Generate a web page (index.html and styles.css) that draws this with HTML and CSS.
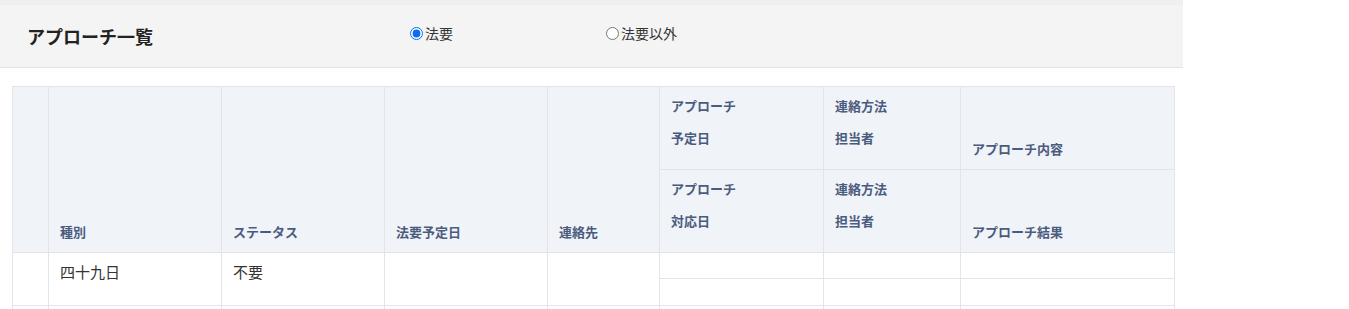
FILE: index.html
```html
<!DOCTYPE html>
<html lang="ja">
<head>
    <meta charset="UTF-8">
    <meta name="viewport" content="width=device-width, initial-scale=1.0">
    <title>アプローチ一覧</title>
    <link rel="stylesheet" href="styles.css">
</head>
<body>
    <div class="page">
        <div class="topbar">
            <h1 class="title">アプローチ一覧</h1>
            <label class="radio"><input type="radio" name="kind" checked>法要</label>
            <label class="radio"><input type="radio" name="kind">法要以外</label>
        </div>

        <table class="list">
            <colgroup>
                <col class="w-check">
                <col class="w-kind">
                <col class="w-status">
                <col class="w-date">
                <col class="w-contact">
                <col class="w-appr">
                <col class="w-method">
                <col class="w-content">
            </colgroup>
            <thead>
                <tr class="head-row">
                    <th rowspan="2"></th>
                    <th rowspan="2">種別</th>
                    <th rowspan="2">ステータス</th>
                    <th rowspan="2">法要予定日</th>
                    <th rowspan="2">連絡先</th>
                    <th class="stack"><span>アプローチ</span><span>予定日</span></th>
                    <th class="stack"><span>連絡方法</span><span>担当者</span></th>
                    <th>アプローチ内容</th>
                </tr>
                <tr class="head-row">
                    <th class="stack"><span>アプローチ</span><span>対応日</span></th>
                    <th class="stack"><span>連絡方法</span><span>担当者</span></th>
                    <th>アプローチ結果</th>
                </tr>
            </thead>
            <tbody>
                <tr class="sub-a">
                    <td rowspan="2"></td>
                    <td rowspan="2">四十九日</td>
                    <td rowspan="2">不要</td>
                    <td rowspan="2"></td>
                    <td rowspan="2"></td>
                    <td></td>
                    <td></td>
                    <td></td>
                </tr>
                <tr class="sub-b">
                    <td></td>
                    <td></td>
                    <td></td>
                </tr>
                <tr class="sub-a">
                    <td rowspan="2"></td>
                    <td rowspan="2"></td>
                    <td rowspan="2"></td>
                    <td rowspan="2"></td>
                    <td rowspan="2"></td>
                    <td></td>
                    <td></td>
                    <td></td>
                </tr>
                <tr class="sub-b">
                    <td></td>
                    <td></td>
                    <td></td>
                </tr>
            </tbody>
        </table>
    </div>
</body>
</html>
```

FILE: styles.css
```css
body {
    margin: 0;
    font-family: "Noto Sans CJK JP", "Noto Sans", sans-serif;
    color: #333;
    background-color: #fff;
}
.page {
    width: 1183px;
}
.topbar {
    display: flex;
    align-items: center;
    height: 62px;
    border-top: 5px solid #efefef;
    border-bottom: 1px solid #e3e3e3;
    background-color: #f4f4f4;
}
.title {
    width: 410px;
    margin: 0;
    padding-left: 27px;
    box-sizing: border-box;
    font-size: 18px;
    font-weight: bold;
    color: #222;
}
.radio {
    display: flex;
    align-items: center;
    width: 196px;
    margin-top: -6px;
    font-size: 14px;
    color: #333;
}
.radio input {
    width: 13px;
    height: 13px;
    margin: 0 2px 0 0;
    accent-color: #0a6cf5;
}
.list {
    margin: 18px 0 0 12px;
    width: 1163px;
    table-layout: fixed;
    border-collapse: collapse;
}
.w-check { width: 36px; }
.w-kind { width: 173px; }
.w-status { width: 163px; }
.w-date { width: 163px; }
.w-contact { width: 112px; }
.w-appr { width: 164px; }
.w-method { width: 137px; }
.w-content { width: 214px; }
.list th,
.list td {
    border: 1px solid #e2e4e8;
    padding: 0 11px;
    text-align: left;
}
.list th {
    background-color: #f0f3f8;
    color: #4b5b7e;
    font-size: 13px;
    font-weight: bold;
    line-height: 19px;
    vertical-align: bottom;
    padding-bottom: 11px;
}
.list th.stack {
    vertical-align: top;
    padding-top: 3px;
    padding-bottom: 0;
}
.stack span {
    display: block;
    line-height: 32px;
}
.head-row {
    height: 83px;
}
.list td {
    font-size: 15px;
    line-height: 20px;
    vertical-align: top;
    padding-top: 9px;
}
.sub-a {
    height: 26px;
}
.sub-b {
    height: 27px;
}
.sub-a td,
.sub-b td {
    padding-top: 0;
}
.sub-a td[rowspan] {
    padding-top: 9px;
}
```
